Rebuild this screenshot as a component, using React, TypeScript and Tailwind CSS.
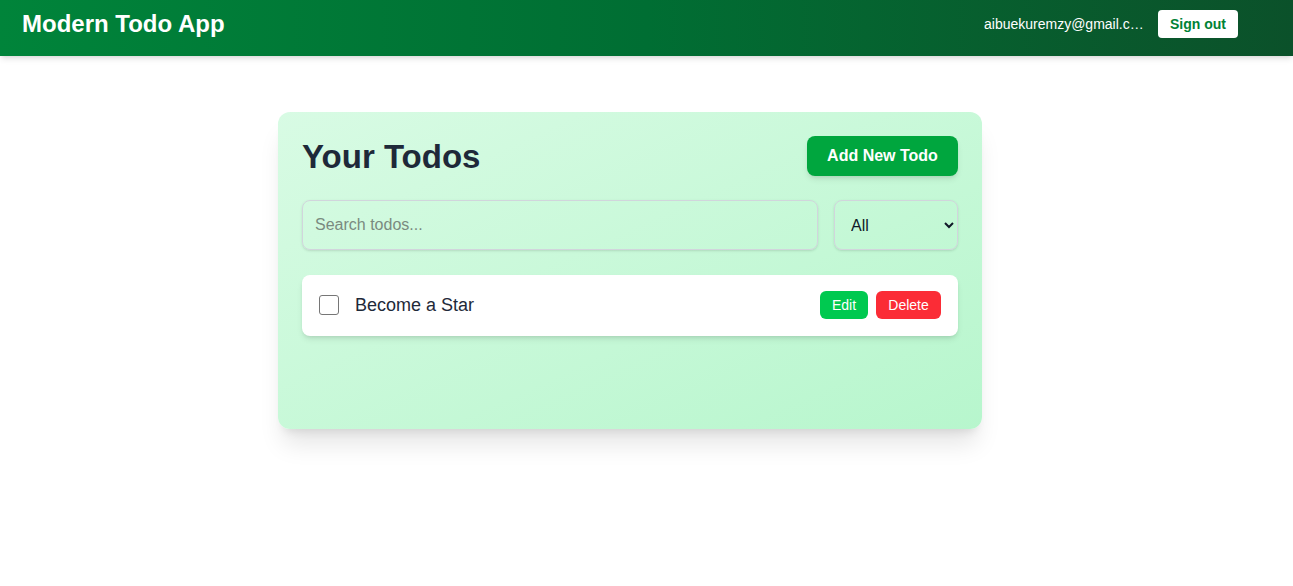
import React from "react";

export default function App() {
  return (
    <div className="min-h-[586px] bg-white" style={{ fontFamily: '"Liberation Sans", Arial, sans-serif' }}>
      <header className="h-[56px] pl-[22px] pr-[55px] bg-gradient-to-r from-[#00843a] via-[#006e33] to-[#0b512a] shadow-md">
        <div className="h-[47px] flex items-center justify-between">
          <h1 className="text-[24px] font-bold text-white">Modern Todo App</h1>
          <div className="flex items-center gap-[12px]">
            <span className="text-sm text-white max-w-[162px] truncate">aibuekuremzy@gmail.com</span>
            <button className="h-[28px] w-[80px] bg-white text-[#008236] text-sm font-bold rounded">Sign out</button>
          </div>
        </div>
      </header>
      <main className="pt-[56px] pl-[278px]">
        <div className="w-[704px] h-[317px] rounded-xl p-6 bg-gradient-to-br from-[#d8fbe4] to-[#b7f6cd] shadow-xl">
          <div className="flex items-center justify-between">
            <h2 className="text-[33px] font-extrabold text-[#1e2939] leading-none">Your Todos</h2>
            <button className="h-[40px] w-[151px] rounded-lg bg-[#00a63e] text-white font-bold text-base shadow-md">Add New Todo</button>
          </div>
          <div className="flex gap-4 mt-6">
            <input
              className="flex-1 h-[50px] rounded-lg border border-[#d1d5dc] bg-transparent px-3 text-base shadow-sm placeholder:text-[#7a8a80] outline-none"
              placeholder="Search todos..."
            />
            <select className="w-[124px] h-[50px] rounded-lg border border-[#d1d5dc] bg-transparent px-3 text-base shadow-sm text-[#101828]">
              <option>All</option>
            </select>
          </div>
          <div className="mt-[25px] h-[61px] bg-white rounded-lg shadow-md flex items-center justify-between px-[17px] pb-[1px]">
            <div className="flex items-center gap-4">
              <div className="w-[20px] h-[20px] rounded-[3px] border border-[#767676] bg-white" />
              <span className="text-lg text-[#1e2939]">Become a Star</span>
            </div>
            <div className="flex gap-2">
              <button className="h-[28px] w-[48px] rounded-md bg-[#00c950] text-white text-sm">Edit</button>
              <button className="h-[28px] w-[65px] rounded-md bg-[#fb2c36] text-white text-sm">Delete</button>
            </div>
          </div>
        </div>
      </main>
    </div>
  );
}
